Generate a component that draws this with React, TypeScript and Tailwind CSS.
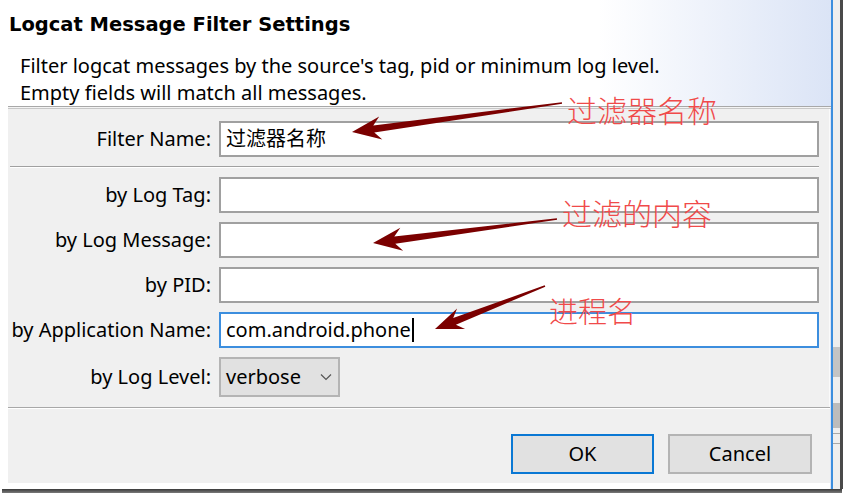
import React from "react"

type Pt = [number, number]

// tapered snagit-style arrow, built from tail and tip
function arrowPoints(tail: Pt, tip: Pt, hl = 29, nl = 22, hw = 11.5, sw = 3.6, tw = 0.8) {
  const dx = tail[0] - tip[0]
  const dy = tail[1] - tip[1]
  const len = Math.hypot(dx, dy)
  const u: Pt = [dx / len, dy / len]
  const n: Pt = [-u[1], u[0]]
  const p = (base: Pt, a: number, b: number): string =>
    `${(base[0] + u[0] * a + n[0] * b).toFixed(1)},${(base[1] + u[1] * a + n[1] * b).toFixed(1)}`
  return [
    p(tip, 0, 0),
    p(tip, hl, hw),
    p(tip, nl, sw),
    p(tail, 0, tw),
    p(tail, 0, -tw),
    p(tip, nl, -sw),
    p(tip, hl, -hw),
  ].join(" ")
}

const labelFont = "font-['Noto_Sans','Noto_Sans_CJK_SC',sans-serif]"

function Field({ label, value, focused }: { label: string; value?: string; focused?: boolean }) {
  return (
    <div className="flex items-center">
      <div className={`w-[203px] text-right text-[20px] leading-[26px] text-black ${labelFont}`}>{label}</div>
      <div
        className={`ml-[8px] flex h-[36px] w-[600px] items-center bg-white pl-[5px] text-[20px] text-black ${labelFont} ${
          focused ? "border-2 border-[#3c8ede]" : "border-2 border-[#a0a0a0]"
        }`}
      >
        {value}
        {focused && <span className="ml-[1px] inline-block h-[24px] w-[2px] bg-black" />}
      </div>
    </div>
  )
}

export default function App() {
  return (
    <div className="relative h-[494px] w-[845px] overflow-hidden bg-white">
      <div className="flex h-[489px]">
        <div className="flex w-[833px] flex-col border-r-2 border-[#3c8ede] bg-[linear-gradient(90deg,#ffffff_72%,#dbe4f6_100%)]">
          {/* header */}
          <div className="h-[106px] pl-[9px] pt-[12px]">
            <div className="font-['DejaVu_Sans',sans-serif] text-[19.5px] font-bold leading-[26px] text-black">
              Logcat Message Filter Settings
            </div>
            <div className={`mt-[14px] pl-[11px] text-[20px] leading-[27px] text-black ${labelFont}`}>
              <div>Filter logcat messages by the source's tag, pid or minimum log level.</div>
              <div>Empty fields will match all messages.</div>
            </div>
          </div>
          <div className="ml-[8px] h-[3px] border-t border-b border-t-[#a8a8a8] border-b-[#c8c8c8] bg-[#f4f4f4]" />

          {/* body */}
          <div className="ml-[8px] flex w-[822px] flex-1 flex-col bg-white">
            <div className="flex h-[298px] flex-col border-r border-[#fafafa] bg-[#f0f0f0] pt-[12px]">
              <Field label="Filter Name:" value="过滤器名称" />
              <div className="mt-[9px] mb-[9px] ml-[2px] mr-[10px] h-[2px] border-t border-b border-t-[#a0a0a0] border-b-white" />
              <div className="flex flex-col gap-[9px]">
                <Field label="by Log Tag:" />
                <Field label="by Log Message:" />
                <Field label="by PID:" />
                <Field label="by Application Name:" value="com.android.phone" focused />
                <div className="flex items-center">
                  <div className={`w-[203px] text-right text-[20px] leading-[26px] text-black ${labelFont}`}>
                    by Log Level:
                  </div>
                  <div
                    className={`ml-[8px] flex h-[40px] w-[121px] items-center justify-between border-2 border-[#b4b4b4] bg-[#e1e1e1] pl-[5px] pr-[6px] text-[20px] text-black ${labelFont}`}
                  >
                    <span>verbose</span>
                    <svg width="12" height="8" viewBox="0 0 12 8" fill="none" stroke="#555" strokeWidth="1.2">
                      <path d="M1 1.5 L6 6.5 L11 1.5" />
                    </svg>
                  </div>
                </div>
              </div>
            </div>
            <div className="h-[2px] border-t border-b border-t-[#a8a8a8] border-b-white" />
            <div className="flex h-[74px] justify-end gap-[14px] bg-[#f0f0f0] pt-[25px] pr-[18px]">
              <button
                className={`h-[40px] w-[143px] border-2 border-[#0a78d4] bg-[#e1e1e1] text-[20px] text-black ${labelFont}`}
              >
                OK
              </button>
              <button
                className={`h-[40px] w-[144px] border-2 border-[#b4b4b4] bg-[#e1e1e1] text-[20px] text-black ${labelFont}`}
              >
                Cancel
              </button>
            </div>
          </div>
        </div>
        {/* neighbour window strip */}
        <div className="flex w-[7px] flex-col bg-[#eeeeee]">
          <div className="h-[347px]" />
          <div className="h-[30px] bg-[#c4c4c4]" />
          <div className="h-[26px]" />
          <div className="h-[25px] bg-[#bcbcbc]" />
          <div className="h-[5px]" />
          <div className="h-[1px] bg-[#a8a8a8]" />
          <div className="h-[9px]" />
          <div className="h-[1px] bg-[#a8a8a8]" />
        </div>
        <div className="w-[3px] bg-[#4a4a4a]" />
      </div>
      <div className="ml-[2px] h-[4px] w-[840px] bg-[linear-gradient(180deg,#3a3a3a,#7a7a7a)]" />

      {/* annotations */}
      <svg className="pointer-events-none absolute left-0 top-0" width="845" height="494">
        <polygon points={arrowPoints([562, 103], [352, 132])} fill="#7b0000" />
        <polygon points={arrowPoints([557, 219], [373, 243])} fill="#7b0000" />
        <polygon points={arrowPoints([545, 286], [435, 329], 28, 21, 11)} fill="#7b0000" />
      </svg>
      <div className="pointer-events-none absolute left-[567px] top-[90px] font-['Noto_Sans_CJK_SC',sans-serif] text-[30px] font-light leading-[38px] text-[#f04a4a]">
        过滤器名称
      </div>
      <div className="pointer-events-none absolute left-[562px] top-[193px] font-['Noto_Sans_CJK_SC',sans-serif] text-[30px] font-light leading-[38px] text-[#f04a4a]">
        过滤的内容
      </div>
      <div className="pointer-events-none absolute left-[549px] top-[291px] font-['Noto_Sans_CJK_SC',sans-serif] text-[29px] font-light leading-[38px] text-[#f04a4a]">
        进程名
      </div>
    </div>
  )
}
